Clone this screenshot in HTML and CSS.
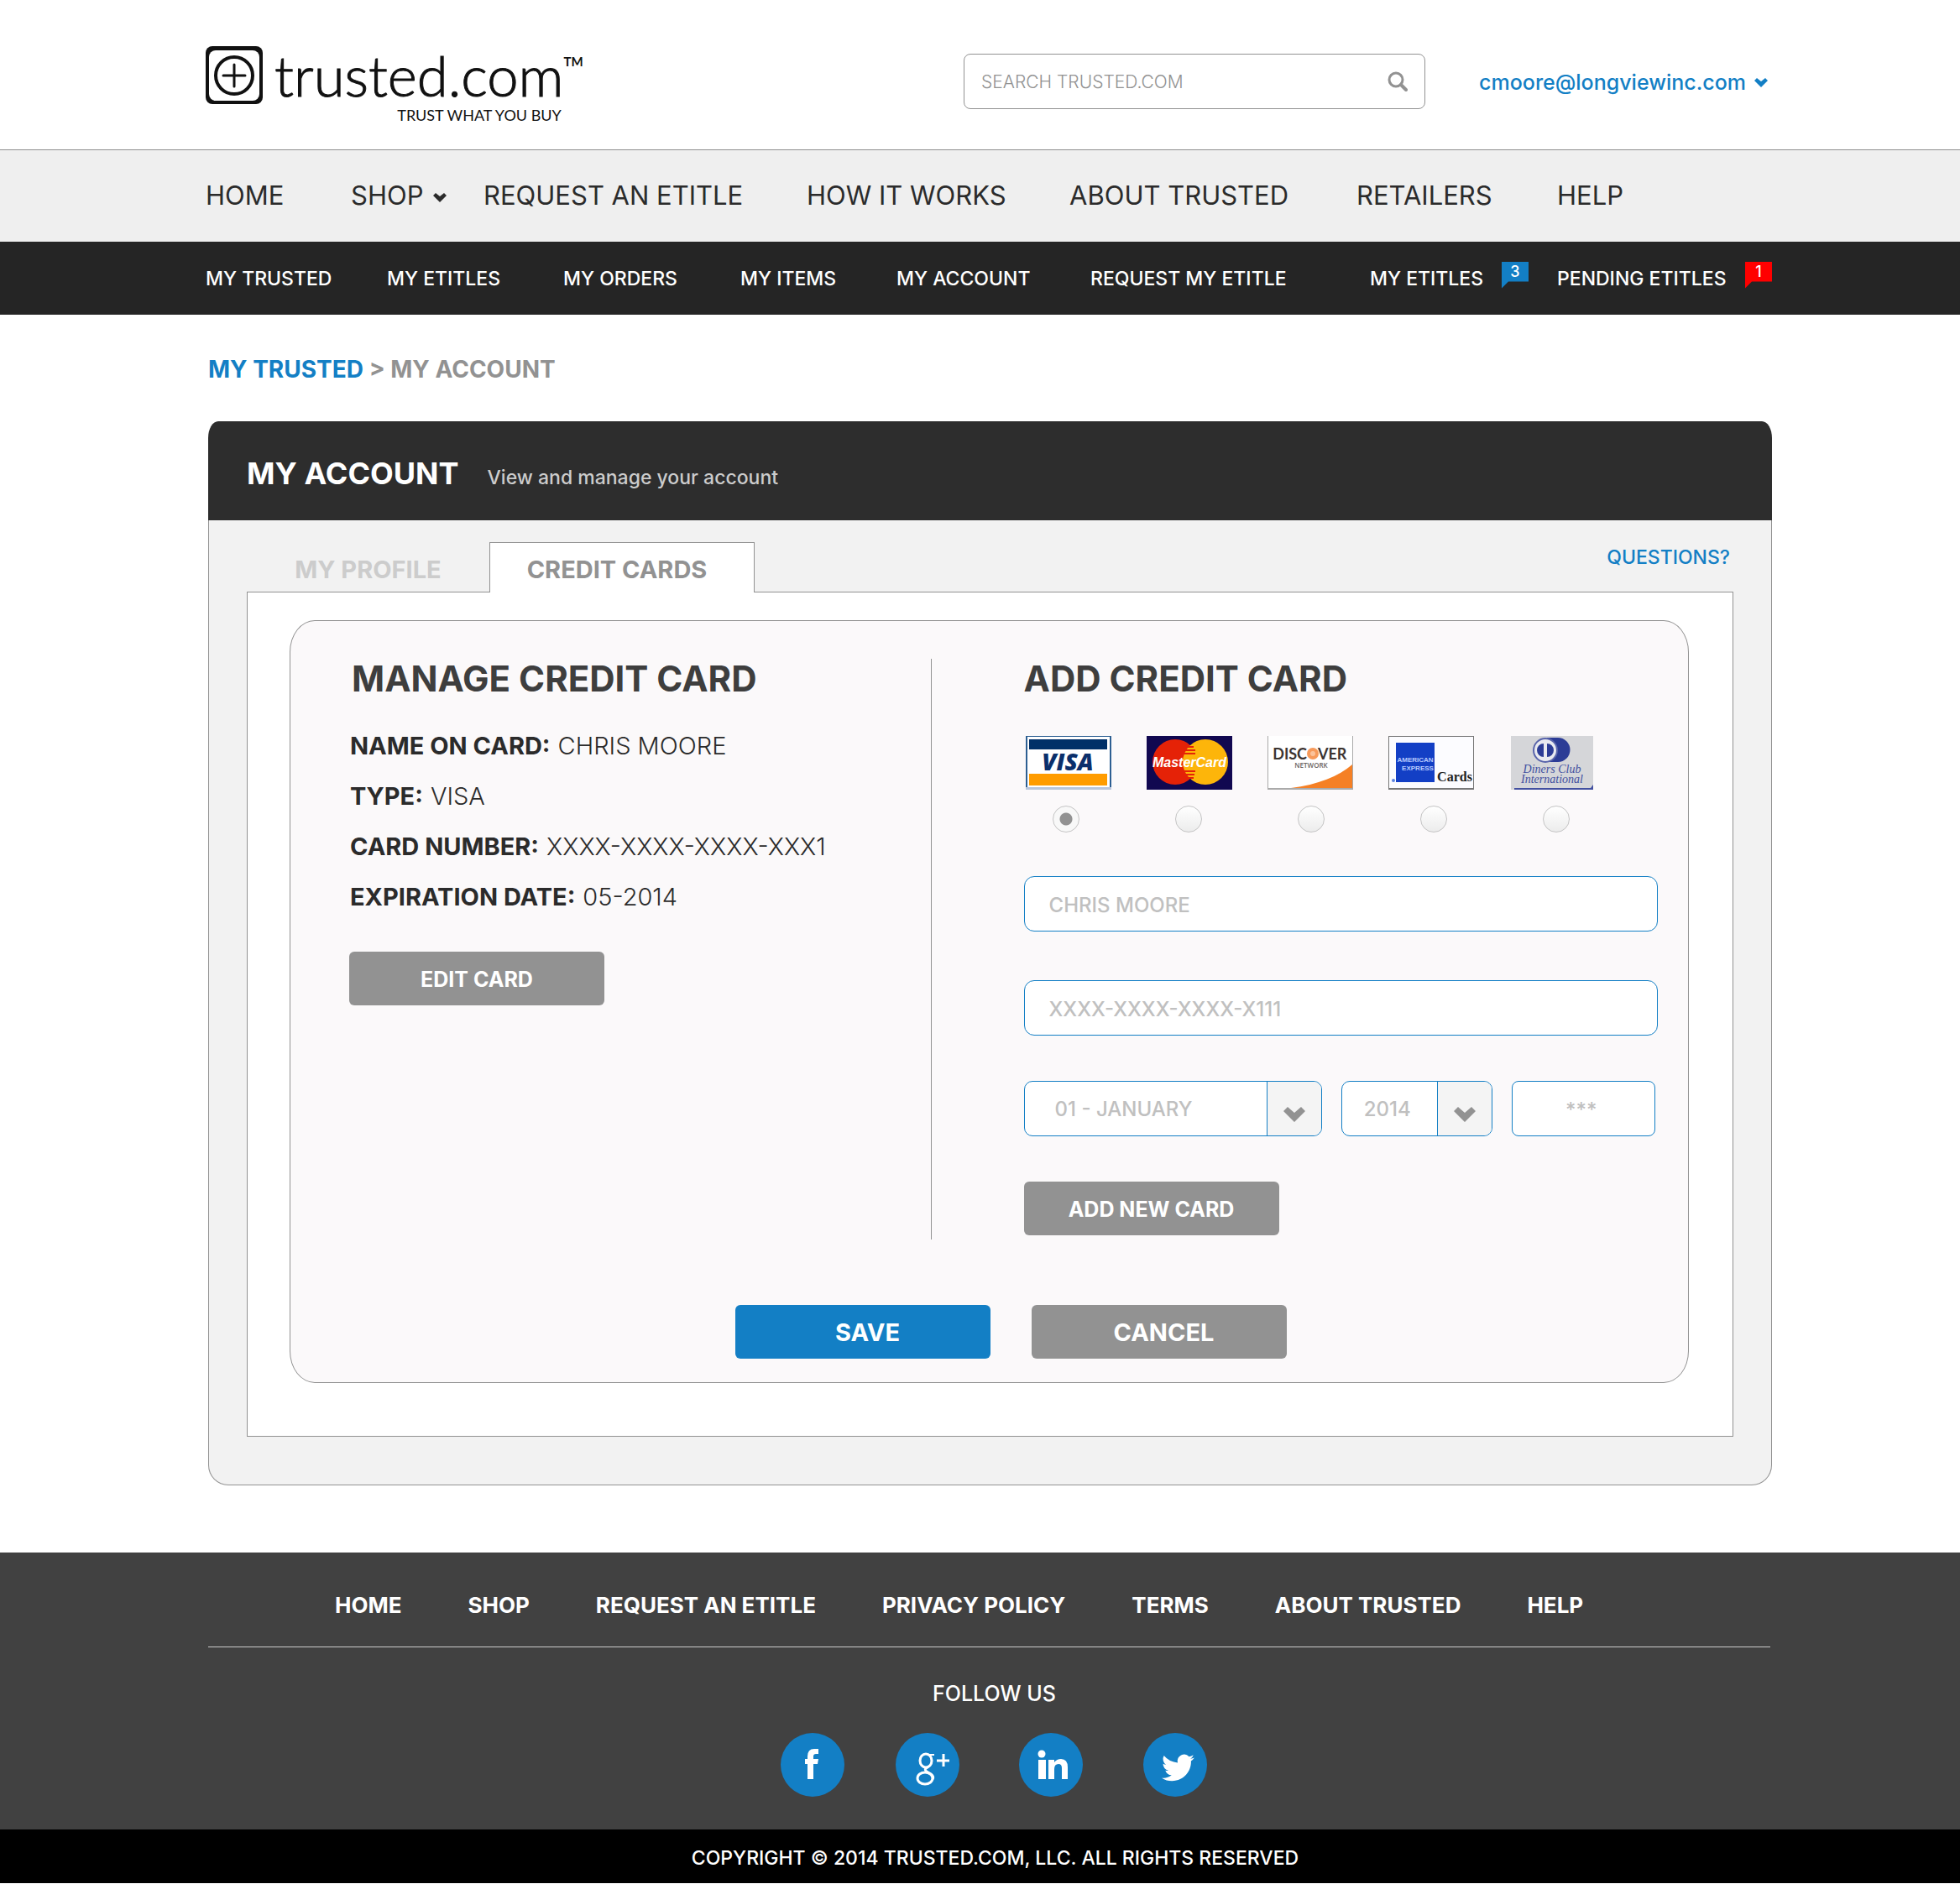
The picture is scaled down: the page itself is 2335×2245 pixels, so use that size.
FILE: index.html
```html
<!DOCTYPE html>
<html lang="en">
<head>
<meta charset="utf-8">
<title>My Account - trusted.com</title>
<link rel="stylesheet" href="styles.css">
</head>
<body>
<header class="top">
  <a class="logo" href="#">
    <svg class="logo-mark" viewBox="0 0 68 69" aria-hidden="true">
      <rect x="0" y="0" width="68" height="69" rx="8" fill="#111"/>
      <rect x="4" y="5" width="60" height="60" rx="8" fill="#fff"/>
      <circle cx="34" cy="35" r="22" fill="none" stroke="#111" stroke-width="4"/>
      <path d="M34 22v26M21 35h26" stroke="#111" stroke-width="3" stroke-linecap="round"/>
    </svg>
    <span class="logo-text">
      <span class="logo-name">trusted.com<sup>TM</sup></span>
      <span class="logo-tag">TRUST WHAT YOU BUY</span>
    </span>
  </a>
  <form class="search">
    <input type="search" placeholder="SEARCH TRUSTED.COM" aria-label="Search trusted.com">
    <button type="button" aria-label="Search">
      <svg viewBox="0 0 24 24"><circle cx="10" cy="10" r="8" fill="none" stroke="#929292" stroke-width="3"/><path d="M16 16l6 6" stroke="#929292" stroke-width="4" stroke-linecap="round"/></svg>
    </button>
  </form>
  <a class="user" href="#">cmoore@longviewinc.com
    <svg class="chevron" viewBox="0 0 16 11"><path d="M0 3L3 0l5 4 5-4 3 3-8 8z" fill="currentColor"/></svg>
  </a>
</header>

<nav class="main-nav">
  <a href="#">HOME</a>
  <a href="#">SHOP <svg class="chevron" viewBox="0 0 16 11"><path d="M0 3L3 0l5 4 5-4 3 3-8 8z" fill="currentColor"/></svg></a>
  <a href="#">REQUEST AN ETITLE</a>
  <a href="#">HOW IT WORKS</a>
  <a href="#">ABOUT TRUSTED</a>
  <a href="#">RETAILERS</a>
  <a href="#">HELP</a>
</nav>

<nav class="sub-nav">
  <a href="#">MY TRUSTED</a>
  <a href="#">MY ETITLES</a>
  <a href="#">MY ORDERS</a>
  <a href="#">MY ITEMS</a>
  <a href="#">MY ACCOUNT</a>
  <a href="#">REQUEST MY ETITLE</a>
  <a class="counted counted-mine" href="#">MY ETITLES <span class="badge">3</span></a>
  <a class="counted" href="#">PENDING ETITLES <span class="badge badge-red">1</span></a>
</nav>

<main class="content">
  <p class="crumbs"><a href="#">MY TRUSTED</a> &gt; MY ACCOUNT</p>

  <section class="account">
    <header class="account-head">
      <h1>MY ACCOUNT</h1>
      <p>View and manage your account</p>
    </header>
    <div class="account-body">
      <div class="tabs">
        <a class="tab" href="#">MY PROFILE</a>
        <a class="tab tab-active" href="#">CREDIT CARDS</a>
        <a class="questions" href="#">QUESTIONS?</a>
      </div>
      <div class="panel">
        <div class="cards">
          <div class="columns">
            <section class="manage">
              <h2>MANAGE CREDIT CARD</h2>
              <dl>
                <div><dt>NAME ON CARD:</dt> <dd>CHRIS MOORE</dd></div>
                <div><dt>TYPE:</dt> <dd>VISA</dd></div>
                <div><dt>CARD NUMBER:</dt> <dd>XXXX-XXXX-XXXX-XXX1</dd></div>
                <div><dt>EXPIRATION DATE:</dt> <dd>05-2014</dd></div>
              </dl>
              <button class="btn" type="button">EDIT CARD</button>
            </section>

            <form class="add">
              <h2>ADD CREDIT CARD</h2>
              <div class="brands">
                <label for="visa">
                  <svg viewBox="0 0 102 64" role="img" aria-label="Visa">
                    <rect width="102" height="64" fill="#2d5f92"/><rect x="2" y="1" width="98" height="60" fill="#fff"/><rect y="61" width="102" height="3" fill="#b9c6dc"/>
                    <rect x="4" y="4" width="93" height="12" fill="#003068"/><rect x="4" y="45" width="93" height="14" fill="#ff9c00"/>
                    <text x="50" y="41" class="t-visa">VISA</text>
                  </svg>
                </label>
                <label for="mastercard">
                  <svg viewBox="0 0 102 64" role="img" aria-label="MasterCard">
                    <rect width="102" height="64" fill="#110850"/>
                    <circle cx="34" cy="31" r="27" fill="#e52207"/><circle cx="70" cy="31" r="27" fill="#fdb50a"/>
                    <path d="M47 13h9M45 17h13M43 21h15M44 42h14M45 46h12M47 50h9" stroke="#e52207" stroke-width="2"/>
                    <text x="51" y="37" class="t-mc">MasterCard</text>
                  </svg>
                </label>
                <label for="discover">
                  <svg viewBox="0 0 102 64" role="img" aria-label="Discover Network">
                    <rect width="102" height="64" fill="#aaa"/><rect x="1" y="0" width="100" height="62" fill="#fff"/>
                    <path d="M28 62C60 58 85 48 101 34v28z" fill="#f58025"/>
                    <circle cx="54" cy="21" r="7" fill="#f79a5a"/><circle cx="54" cy="21" r="3" fill="#fbc39b"/>
                    <text x="47" y="28" class="t-disc t-end">DISC</text><text x="60" y="28" class="t-disc">VER</text>
                    <text x="52" y="38" class="t-net">NETWORK</text>
                  </svg>
                </label>
                <label for="amex">
                  <svg viewBox="0 0 102 64" role="img" aria-label="American Express Cards">
                    <rect width="102" height="64" fill="#777"/><rect x="1" y="1" width="100" height="61" fill="#fcfcff"/>
                    <rect x="9" y="8" width="46" height="47" fill="#133fc5"/>
                    <text x="32" y="31" class="t-amex">AMERICAN</text><text x="35" y="41" class="t-amex">EXPRESS</text>
                    <circle cx="6" cy="53" r="2" fill="#5b83e0"/>
                    <text x="79" y="54" class="t-cards">Cards</text>
                  </svg>
                </label>
                <label for="diners">
                  <svg viewBox="0 0 102 64" role="img" aria-label="Diners Club International">
                    <rect x="2" width="98" height="64" fill="#d5d6d9"/><path d="M6 64h94v-6l-3 4H6z" fill="#4250a0"/>
                    <path d="M45 2h13a14 14 0 0 1 0 29H45z" fill="#2c3c96"/>
                    <circle cx="43" cy="17" r="14" fill="#e9eaf0" stroke="#5964ab" stroke-width="2"/>
                    <path d="M41 9v16a8 8 0 0 1 0-16zM45 9v16a8 8 0 0 0 0-16z" fill="#2c3c96"/>
                    <text x="51" y="44" class="t-din">Diners Club</text><text x="51" y="56" class="t-din">International</text>
                  </svg>
                </label>
              </div>
              <div class="picks">
                <input type="radio" name="brand" id="visa" checked>
                <input type="radio" name="brand" id="mastercard">
                <input type="radio" name="brand" id="discover">
                <input type="radio" name="brand" id="amex">
                <input type="radio" name="brand" id="diners">
              </div>
              <input class="field" type="text" placeholder="CHRIS MOORE" aria-label="Name on card">
              <input class="field" type="text" placeholder="XXXX-XXXX-XXXX-X111" aria-label="Card number">
              <div class="expiry">
                <span class="pick pick-month">
                  <select aria-label="Expiration month"><option>01 - JANUARY</option></select>
                  <span class="arrow"><svg viewBox="0 0 26 18"><path d="M0 5l5-5 8 7 8-7 5 5-13 13z" fill="#929292"/></svg></span>
                </span>
                <span class="pick pick-year">
                  <select aria-label="Expiration year"><option>2014</option></select>
                  <span class="arrow"><svg viewBox="0 0 26 18"><path d="M0 5l5-5 8 7 8-7 5 5-13 13z" fill="#929292"/></svg></span>
                </span>
                <input class="field code" type="text" placeholder="***" aria-label="Security code">
              </div>
              <button class="btn" type="button">ADD NEW CARD</button>
            </form>
          </div>
          <div class="actions">
            <button class="btn btn-big btn-blue" type="button">SAVE</button>
            <button class="btn btn-big" type="button">CANCEL</button>
          </div>
        </div>
      </div>
    </div>
  </section>
</main>

<footer class="footer">
  <nav class="foot-nav">
    <a href="#">HOME</a>
    <a href="#">SHOP</a>
    <a href="#">REQUEST AN ETITLE</a>
    <a href="#">PRIVACY POLICY</a>
    <a href="#">TERMS</a>
    <a href="#">ABOUT TRUSTED</a>
    <a href="#">HELP</a>
  </nav>
  <div class="follow">
    <p>FOLLOW US</p>
    <div class="social">
      <a href="#" aria-label="Facebook"><svg viewBox="0 0 77 77"><circle cx="38" cy="38" r="38" fill="#137fc5"/><path d="M32 55V37h-3v-6h3v-3q0-9 8-9h5v6h-3q-3 0-3 3v3h6l-1 6h-5v18z" fill="#fff"/></svg></a>
      <a href="#" aria-label="Google Plus"><svg viewBox="0 0 77 77"><circle cx="38" cy="38" r="38" fill="#137fc5"/><g fill="none" stroke="#fff"><ellipse cx="36" cy="33" rx="7" ry="8" stroke-width="3"/><path d="M38 26h8" stroke-width="2"/><path d="M38 41q-5 2-1 5l5 3q4 3 2 6" stroke-width="3"/><ellipse cx="35" cy="54" rx="9" ry="7" stroke-width="3"/><path d="M57 25v15M49 33h15" stroke-width="3"/></g></svg></a>
      <a href="#" aria-label="LinkedIn"><svg viewBox="0 0 77 77"><circle cx="38" cy="38" r="38" fill="#137fc5"/><g fill="#fff"><circle cx="27" cy="25" r="4.500"/><path d="M23 32h9v23h-9zM35 32h7v3q3-4 8-4 8 0 8 10v14h-7V42q0-5-4-5-5 0-5 6v12h-7z"/></g></svg></a>
      <a href="#" aria-label="Twitter"><svg viewBox="0 0 77 77"><circle cx="38" cy="38" r="38" fill="#137fc5"/><path transform="translate(22 22) scale(1.620)" fill="#fff" d="M23.950 4.570a10 10 0 0 1-2.820.77 4.960 4.960 0 0 0 2.160-2.720c-.95.550-2 .96-3.130 1.180a4.920 4.920 0 0 0-8.380 4.480A13.930 13.930 0 0 1 1.640 3.160a4.920 4.920 0 0 0 1.520 6.570 4.900 4.900 0 0 1-2.230-.61v.06a4.920 4.920 0 0 0 3.950 4.830 5 5 0 0 1-2.210.08 4.940 4.940 0 0 0 4.600 3.420A9.870 9.870 0 0 1 0 19.540a14 14 0 0 0 7.550 2.210c9.050 0 14-7.500 14-13.980 0-.21 0-.42-.02-.63a9.940 9.940 0 0 0 2.460-2.550z"/></svg></a>
    </div>
  </div>
</footer>
<p class="copyright">COPYRIGHT © 2014 TRUSTED.COM, LLC. ALL RIGHTS RESERVED</p>
</body>
</html>
```
FILE: styles.css
```css
* { box-sizing: border-box; }

body {
  margin: 0;
  font-family: Inter, "Liberation Sans", sans-serif;
  color: #2b2b2b;
  background: #fff;
}

a { color: inherit; text-decoration: none; }
h1, h2, p, dl, dd { margin: 0; }
svg { display: block; }
input, select, button { font-family: inherit; }

/* Header */
.top {
  display: flex;
  align-items: center;
  height: 179px;
  padding: 0 224px 0 245px;
  border-bottom: 1px solid #8f8f8f;
}

.logo {
  display: flex;
  gap: 14px;
  margin-right: auto;
  padding-top: 24px;
  font-family: Lato, sans-serif;
  color: #111;
}
.logo-mark { width: 68px; height: 69px; margin-top: 2px; }
.logo-text { display: flex; flex-direction: column; }
.logo-name {
  font-size: 67px;
  font-weight: 300;
  line-height: 72px;
  -webkit-text-stroke: 1px #111;
}
.logo-name sup {
  font-size: 15px;
  font-weight: 700;
  line-height: 16px;
  vertical-align: 36px;
  -webkit-text-stroke: 0;
}
.logo-tag { align-self: flex-end; padding-right: 26px; font-size: 18px; line-height: 24px; }

.search {
  display: flex;
  align-items: center;
  width: 550px;
  height: 66px;
  margin: 16px 64px 0 0;
  padding: 0 20px;
  border: 1px solid #929292;
  border-radius: 8px;
}
.search input {
  flex: 1;
  min-width: 0;
  padding: 0;
  border: 0;
  outline: 0;
  background: none;
  font-size: 21px;
  font-weight: 300;
}
.search input::placeholder { color: #929292; }
.search button { padding: 0; border: 0; background: none; }
.search svg { width: 24px; height: 24px; }

.user {
  display: flex;
  align-items: center;
  gap: 10px;
  padding: 18px 5px 0 0;
  font-size: 25px;
  font-weight: 500;
  color: #137fc5;
}
.chevron { width: 16px; height: 11px; }

/* Navigation */
.main-nav, .sub-nav {
  display: grid;
  align-items: center;
  padding: 0 224px 0 245px;
  white-space: nowrap;
}
.main-nav {
  grid-template-columns: 173fr 158fr 385fr 313fr 342fr 239fr 256fr;
  height: 109px;
  padding-bottom: 3px;
  background: #efefef;
  font-size: 31px;
}
.main-nav a { display: flex; align-items: center; gap: 12px; }
.main-nav .chevron { margin-top: 6px; }
.sub-nav {
  grid-template-columns: 216fr 210fr 211fr 186fr 231fr 333fr 223fr 256fr;
  height: 87px;
  background: #252525;
  font-size: 23px;
  font-weight: 500;
  color: #fff;
}
.counted { display: flex; justify-content: space-between; }
.counted-mine { padding-right: 34px; }
.badge {
  width: 32px;
  height: 32px;
  margin: -6px 0 2px;
  background: #137fc5;
  clip-path: polygon(0 0, 100% 0, 100% 24px, 8px 24px, 0 100%);
  font-size: 18px;
  line-height: 24px;
  text-align: center;
}
.badge-red { background: #f00; }

/* Account panel */
.content { padding: 48px 224px 80px 248px; }
.crumbs {
  font-size: 28px;
  font-weight: 700;
  line-height: 34px;
  color: #929292;
}
.crumbs a { color: #137fc5; }
.account { margin-top: 45px; }
.account-head {
  display: flex;
  align-items: baseline;
  gap: 34px;
  height: 118px;
  padding: 40px 46px 0;
  border-radius: 12px 12px 0 0 / 20px 20px 0 0;
  background: #2d2d2d;
  color: #fff;
}
.account-head h1 { font-size: 36px; line-height: 44px; }
.account-head p { font-size: 23px; font-weight: 500; color: #ccc; }
.account-body {
  padding: 26px 45px 57px;
  border: 1px solid #929292;
  border-top: 0;
  border-radius: 0 0 24px 24px;
  background: #f2f2f2;
}
.tabs { display: flex; height: 59px; }
.tab {
  width: 289px;
  padding-top: 16px;
  font-size: 29px;
  font-weight: 700;
  line-height: 34px;
  text-align: center;
  color: #ccc;
}
.tab-active {
  width: 316px;
  height: 60px;
  padding: 15px 12px 0 0;
  border: 1px solid #929292;
  border-bottom: 0;
  background: #fff;
  color: #929292;
  z-index: 1;
}
.questions {
  margin-left: auto;
  padding: 4px 4px 0 0;
  font-size: 23px;
  font-weight: 500;
  line-height: 28px;
  color: #137fc5;
}
.panel {
  padding: 33px 52px 63px 50px;
  border: 1px solid #929292;
  background: #fff;
}
.cards {
  padding: 45px 36px 28px 70px;
  border: 1px solid #929292;
  border-radius: 30px / 38px;
  background: #fbf9fa;
}
.columns { display: grid; grid-template-columns: 694fr 866fr; }
.manage { border-right: 1px solid #929292; padding-top: 4px; }
h2 {
  font-size: 42px;
  line-height: 40px;
  color: #3e3e3e;
}
.manage h2 { padding-left: 3px; }
dl { margin: 30px 0 35px 1px; }
dl div { display: flex; gap: 9px; font-size: 29px; line-height: 60px; }
dt { font-weight: 700; }
dd { font-weight: 300; }

.btn {
  display: block;
  width: 304px;
  height: 64px;
  padding: 2px 0 0;
  border: 0;
  border-radius: 6px;
  background: #929292;
  font-size: 25px;
  font-weight: 700;
  color: #fff;
}
.btn-big { padding: 0 0 0 12px; font-size: 29px; }
.btn-blue { background: #137fc5; }

.add { padding: 4px 0 5px 110px; }
.brands { display: flex; gap: 42px; margin-top: 48px; padding-left: 2px; }
.brands svg { width: 102px; height: 64px; }
.t-visa, .t-mc, .t-net, .t-amex, .t-cards, .t-din { text-anchor: middle; }
.t-visa { font: italic 800 28px "Open Sans", sans-serif; fill: #0b2f6b; }
.t-mc { font: italic 700 16px "Liberation Sans", sans-serif; fill: #fff; }
.t-disc { font: 700 18px Lato, sans-serif; fill: #3c3431; }
.t-end { text-anchor: end; }
.t-net { font: 600 8px "Open Sans", sans-serif; fill: #6b6461; }
.t-amex { font: 700 8px "Liberation Sans", sans-serif; fill: #b9cbff; }
.t-cards { font: 700 16px "Liberation Serif", serif; fill: #222; }
.t-din { font: italic 400 14px "Liberation Serif", serif; fill: #4250a0; }

.picks { display: flex; gap: 114px; margin: 19px 0 52px 34px; }
.picks input {
  appearance: none;
  width: 32px;
  height: 32px;
  margin: 0;
  border: 1px solid #c4c4c4;
  border-radius: 50%;
  background: linear-gradient(#fff, #ececec);
}
.picks input:checked { background: radial-gradient(circle, #929292 7px, #f8f8f8 8px); }

.field {
  display: block;
  width: 100%;
  height: 66px;
  margin: 0 0 58px;
  padding: 2px 29px 0;
  border: 1px solid #137fc5;
  border-radius: 12px;
  background: #fff;
  font-size: 24px;
  font-weight: 500;
}
.field::placeholder { color: #c0c0c0; }
.expiry {
  display: grid;
  grid-template-columns: 356fr 181fr 171fr;
  gap: 23px;
  margin: -4px 3px 54px 0;
}
.pick {
  display: flex;
  height: 66px;
  border: 1px solid #137fc5;
  border-radius: 10px;
  overflow: hidden;
  background: #fff;
}
.pick select {
  flex: 1;
  min-width: 0;
  appearance: none;
  border: 0;
  padding: 0 0 0 36px;
  background: none;
  font-size: 24px;
  font-weight: 500;
  color: #c0c0c0;
}
.pick-year select { padding-left: 26px; }
.arrow {
  display: flex;
  align-items: center;
  justify-content: center;
  width: 65px;
  padding-top: 14px;
  border-left: 1px solid #137fc5;
  background: #f4f4f4;
}
.arrow svg { width: 26px; height: 18px; }
.code { margin: 0; padding: 2px 16px 0 10px; border-radius: 8px; text-align: center; }

.actions {
  display: flex;
  justify-content: center;
  gap: 49px;
  margin-top: 78px;
  padding-left: 17px;
}

/* Footer */
.footer {
  padding: 0 226px 38px 248px;
  background: #414141;
  color: #fff;
}
.foot-nav {
  display: flex;
  gap: 79px;
  padding: 48px 0 34px 151px;
  border-bottom: 1px solid #ccc;
  font-size: 26px;
  font-weight: 700;
  line-height: 30px;
  white-space: nowrap;
}
.follow {
  display: flex;
  flex-direction: column;
  align-items: center;
  gap: 32px;
  padding: 40px 0 0 12px;
  font-size: 25px;
  font-weight: 500;
  line-height: 30px;
}
.social { display: grid; grid-template-columns: 137px 147px 148px 77px; }
.social svg { width: 77px; height: 77px; }
.copyright {
  margin-bottom: 3px;
  padding: 20px 0 16px 36px;
  background: #000;
  font-size: 23px;
  font-weight: 500;
  line-height: 28px;
  text-align: center;
  color: #fff;
}
```
